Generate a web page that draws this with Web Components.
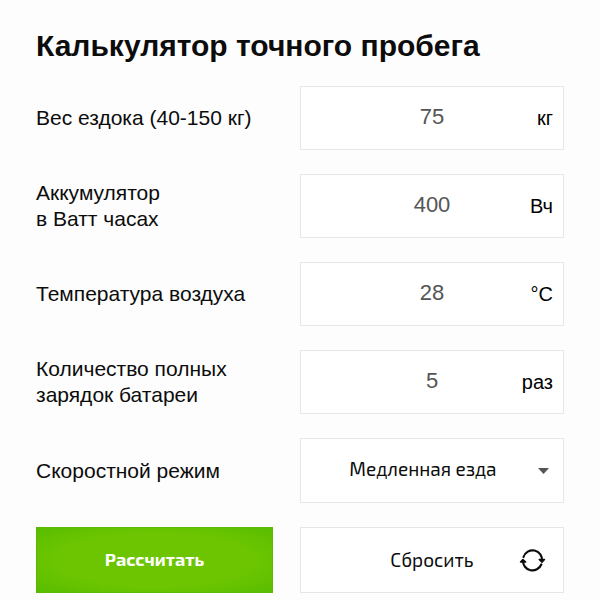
<!DOCTYPE html>
<html lang="ru">
<head>
<meta charset="utf-8">
<meta name="viewport" content="width=device-width, initial-scale=1">
<title>Калькулятор точного пробега</title>
<style>
  body {
    margin: 0;
    background: #fdfdfd;
    color: #0c0c0c;
    font-family: "Liberation Sans", Arial, sans-serif;
    font-size: 21px;
    line-height: 26px;
  }
</style>
</head>
<body>

<range-calculator>
  <span slot="title">Калькулятор точного пробега</span>
  <number-field value="75">Вес ездока (40-150 кг)<span slot="unit">кг</span></number-field>
  <number-field value="400">Аккумулятор<br>в Ватт часах<span slot="unit">Вч</span></number-field>
  <number-field value="28">Температура воздуха<span slot="unit">°C</span></number-field>
  <number-field value="5">Количество полных<br>зарядок батареи<span slot="unit">раз</span></number-field>
  <select-field options="Медленная езда">Скоростной режим</select-field>
  <form-actions>
    <span slot="submit">Рассчитать</span>
    <span slot="reset">Сбросить</span>
  </form-actions>
</range-calculator>

<template id="calculator-template">
  <style>
    :host {
      display: block;
      padding: 28px 36px 0;
      --border: #e6e6e6;
      --columns: minmax(0, 237fr) minmax(0, 264fr);
      --column-gap: 27px;
      --button-font: "Exo 2", "Noto Sans", sans-serif;
    }
    h1 {
      margin: 0 0 22px;
      font-size: 30px;
      line-height: 36px;
    }
    .rows {
      display: flex;
      flex-direction: column;
      gap: 24px;
    }
  </style>
  <h1><slot name="title"></slot></h1>
  <div class="rows"><slot></slot></div>
</template>

<template id="number-template">
  <style>
    :host {
      display: grid;
      grid-template-columns: var(--columns);
      column-gap: var(--column-gap);
      align-items: center;
    }
    .box {
      display: grid;
      grid-template-columns: 40px 1fr 40px;
      align-items: center;
      box-sizing: border-box;
      height: 64px;
      padding: 0 10px;
      border: 1px solid var(--border);
      background: #fff;
    }
    input {
      grid-column: 2;
      width: 100%;
      box-sizing: border-box;
      padding: 0 0 2px;
      border: 0;
      outline: 0;
      background: none;
      color: #555;
      font: inherit;
      font-size: 22px;
      text-align: center;
    }
    .unit {
      font-size: 20px;
      text-align: right;
      color: #000;
    }
  </style>
  <label for="value"><slot></slot></label>
  <div class="box">
    <input id="value" type="text" inputmode="numeric">
    <span class="unit"><slot name="unit"></slot></span>
  </div>
</template>

<template id="select-template">
  <style>
    :host {
      display: grid;
      grid-template-columns: var(--columns);
      column-gap: var(--column-gap);
      align-items: center;
    }
    .box {
      display: grid;
      align-items: center;
    }
    select, svg {
      grid-area: 1 / 1;
    }
    select {
      appearance: none;
      width: 100%;
      height: 65px;
      box-sizing: border-box;
      padding: 0 34px 4px 16px;
      border: 1px solid var(--border);
      border-radius: 0;
      background: #fff;
      color: #0c0c0c;
      font: 19px var(--button-font);
      text-align: center;
      text-align-last: center;
    }
    svg {
      justify-self: end;
      margin-right: 15px;
      pointer-events: none;
    }
  </style>
  <label for="mode"><slot></slot></label>
  <div class="box">
    <select id="mode"></select>
    <svg width="11" height="6" viewBox="0 0 11 6" aria-hidden="true">
      <path d="M0 0h11L5.500 6z" fill="#555"/>
    </svg>
  </div>
</template>

<template id="actions-template">
  <style>
    :host {
      display: grid;
      grid-template-columns: var(--columns);
      column-gap: var(--column-gap);
    }
    button {
      height: 66px;
      padding: 0;
      border: 1px solid var(--border);
      background: #fff;
      color: #0c0c0c;
      font: 19px var(--button-font);
      cursor: pointer;
    }
    span {
      padding-bottom: 2px;
    }
    .submit {
      padding-bottom: 2px;
      border-color: #5cb800;
      background: radial-gradient(ellipse, #6cc500 60%, #58bd00 100%);
      color: #fff;
      font-size: 18px;
      font-weight: 700;
    }
    .reset {
      display: grid;
      grid-template-columns: 45px 1fr 45px;
      align-items: center;
    }
    .reset span {
      grid-column: 2;
    }
  </style>
  <button class="submit" type="button"><slot name="submit"></slot></button>
  <button class="reset" type="button">
    <span><slot name="reset"></slot></span>
    <svg width="28" height="24" viewBox="0 0 28 24" fill="none" stroke="#0c0c0c" stroke-width="2.200" stroke-linecap="round" aria-hidden="true">
      <path d="M5.500 9A9.500 9.500 0 0 1 24 13"/>
      <path d="M23.300 16.500A9.500 9.500 0 0 1 5 12.500"/>
      <path d="M21.200 11.500L24 14.200L26.500 11.500z" fill="#0c0c0c" stroke-width="1.400" stroke-linejoin="round"/>
      <path d="M2.500 14L4.900 11.500L7.700 14z" fill="#0c0c0c" stroke-width="1.400" stroke-linejoin="round"/>
    </svg>
  </button>
</template>

<script>
  class TemplateElement extends HTMLElement {
    constructor(templateId) {
      super();
      const template = document.getElementById(templateId);
      this.attachShadow({mode: 'open'}).appendChild(template.content.cloneNode(true));
    }
  }

  class RangeCalculator extends TemplateElement {
    constructor() {
      super('calculator-template');
    }
  }

  class NumberField extends TemplateElement {
    constructor() {
      super('number-template');
    }

    connectedCallback() {
      this.shadowRoot.querySelector('input').value = this.getAttribute('value');
    }
  }

  class SelectField extends TemplateElement {
    constructor() {
      super('select-template');
    }

    connectedCallback() {
      const select = this.shadowRoot.querySelector('select');
      // options are separated with "|"
      const options = this.getAttribute('options').split('|').map(text => new Option(text));
      select.replaceChildren(...options);
    }
  }

  class FormActions extends TemplateElement {
    constructor() {
      super('actions-template');
    }

    connectedCallback() {
      this.shadowRoot.querySelector('.reset').addEventListener('click', () => {
        this.parentElement.querySelectorAll('number-field').forEach(field => field.connectedCallback());
      });
    }
  }

  customElements.define('range-calculator', RangeCalculator);
  customElements.define('number-field', NumberField);
  customElements.define('select-field', SelectField);
  customElements.define('form-actions', FormActions);
</script>
</body>
</html>
